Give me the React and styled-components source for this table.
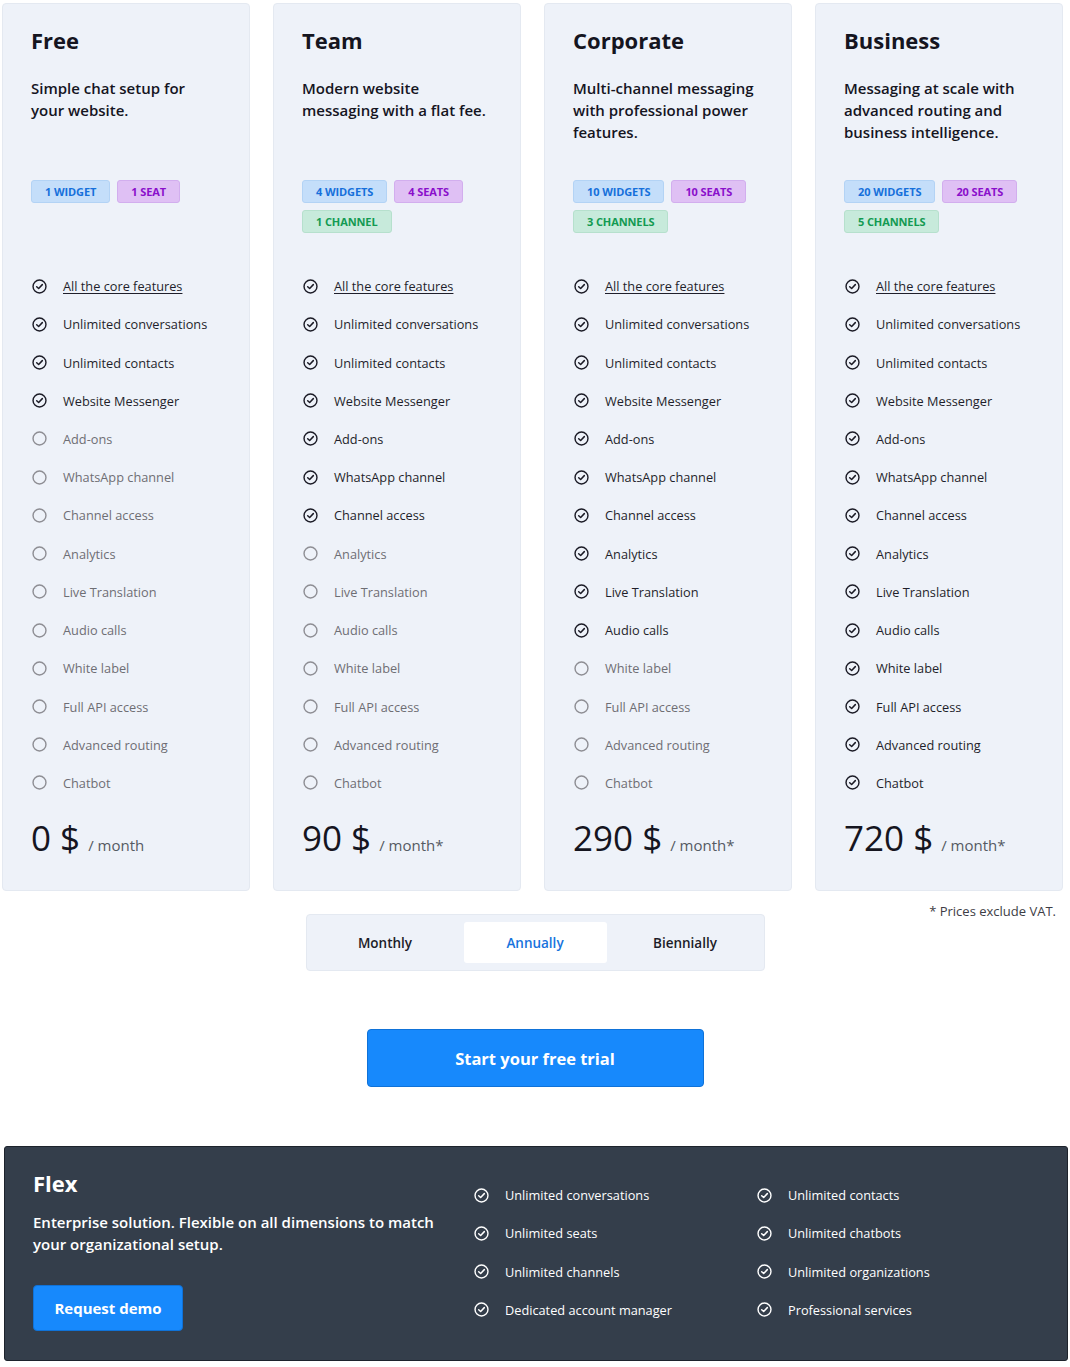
import React from 'react';
import styled, { createGlobalStyle } from 'styled-components';

const GlobalStyle = createGlobalStyle`
  body {
    margin: 0;
    background: #fff;
    font-family: "Open Sans", "Noto Sans", sans-serif;
    color: #1c1c28;
  }
`;

const FEATURES = [
  'All the core features',
  'Unlimited conversations',
  'Unlimited contacts',
  'Website Messenger',
  'Add-ons',
  'WhatsApp channel',
  'Channel access',
  'Analytics',
  'Live Translation',
  'Audio calls',
  'White label',
  'Full API access',
  'Advanced routing',
  'Chatbot',
];

const plans = [
  {
    name: 'Free',
    desc: 'Simple chat setup for your website.',
    badges: [['blue', '1 widget'], ['purple', '1 seat']],
    included: 4,
    price: '0 $',
    per: '/ month',
  },
  {
    name: 'Team',
    desc: 'Modern website messaging with a flat fee.',
    badges: [['blue', '4 widgets'], ['purple', '4 seats'], ['green', '1 channel']],
    included: 7,
    price: '90 $',
    per: '/ month*',
  },
  {
    name: 'Corporate',
    desc: 'Multi-channel messaging with professional power features.',
    badges: [['blue', '10 widgets'], ['purple', '10 seats'], ['green', '3 channels']],
    included: 10,
    price: '290 $',
    per: '/ month*',
  },
  {
    name: 'Business',
    desc: 'Messaging at scale with advanced routing and business intelligence.',
    badges: [['blue', '20 widgets'], ['purple', '20 seats'], ['green', '5 channels']],
    included: 14,
    price: '720 $',
    per: '/ month*',
  },
];

const flexFeatures = [
  'Unlimited conversations',
  'Unlimited contacts',
  'Unlimited seats',
  'Unlimited chatbots',
  'Unlimited channels',
  'Unlimited organizations',
  'Dedicated account manager',
  'Professional services',
];

const badgeColors = {
  blue: { bg: '#c4defa', fg: '#1670db', border: '#b3d3f5' },
  purple: { bg: '#dfc0f4', fg: '#8a0fcb', border: '#d2aeee' },
  green: { bg: '#c7eadb', fg: '#139a52', border: '#b6e0cd' },
};

const Page = styled.div`
  width: 1070px;
  padding-top: 3px;
  padding-bottom: 7px;
`;

const Cards = styled.div`
  display: grid;
  grid-template-columns: repeat(4, 248px);
  gap: 23px;
  padding: 0 7px 0 2px;
`;

const Card = styled.div`
  background: #eef2f9;
  border: 1px solid #e4e9f1;
  border-radius: 4px;
  padding: 21px 0 23px 28px;
  display: flex;
  flex-direction: column;
`;

const PlanName = styled.h2`
  margin: 0;
  font-size: 22px;
  line-height: 30px;
  font-weight: 700;
  color: #15151f;
`;

const PlanDesc = styled.p`
  margin: 22px 0 0;
  height: 103px;
  width: 190px;
  font-size: 15px;
  line-height: 22px;
  font-weight: 600;
  color: #15151f;
`;

const Badges = styled.div`
  display: flex;
  flex-wrap: wrap;
  gap: 7px 7px;
  align-content: flex-start;
  height: 87px;
  width: 200px;
`;

const Badge = styled.span`
  display: inline-flex;
  align-items: center;
  height: 23px;
  box-sizing: border-box;
  padding: 0 13px;
  border-radius: 3px;
  font-size: 11px;
  font-weight: 700;
  text-transform: uppercase;
  letter-spacing: -0.1px;
  background: ${p => badgeColors[p.$tone].bg};
  color: ${p => badgeColors[p.$tone].fg};
  border: 1px solid ${p => badgeColors[p.$tone].border};
`;

const FeatureList = styled.ul`
  list-style: none;
  margin: 0;
  padding: 0;
`;

const Feature = styled.li`
  display: flex;
  align-items: center;
  gap: 16px;
  height: 38.23px;
  padding-left: 1px;
  font-size: 12.75px;
  color: ${p => (p.$on ? '#1f1f2b' : '#6e6e74')};
`;

const FeatureLabel = styled.span`
  text-decoration: ${p => (p.$link ? 'underline' : 'none')};
  text-underline-offset: 2px;
`;

const PriceRow = styled.div`
  display: flex;
  align-items: baseline;
  margin-top: 14px;
  line-height: 44px;
`;

const Price = styled.span`
  font-size: 35px;
  font-weight: 400;
  color: #15151f;
`;

const Per = styled.span`
  margin-left: 8px;
  font-size: 15px;
  color: #555a63;
`;

const ToggleRow = styled.div`
  display: grid;
  grid-template-columns: 1fr auto 1fr;
  margin-top: 9px;
  padding-right: 14px;
`;

const Note = styled.div`
  grid-column: 3;
  justify-self: end;
  font-size: 13px;
  line-height: 22px;
  color: #3d3d45;
`;

const Toggle = styled.div`
  grid-column: 2;
  margin-top: 14px;
  margin-left: 14px;
  display: flex;
  gap: 7px;
  padding: 7px;
  background: #eef2f9;
  border: 1px solid #e4e9f1;
  border-radius: 4px;
`;

const Tab = styled.div`
  width: 143px;
  height: 41px;
  display: flex;
  align-items: center;
  justify-content: center;
  border-radius: 3px;
  font-size: 13.5px;
  font-weight: 600;
  background: ${p => (p.$active ? '#ffffff' : 'transparent')};
  color: ${p => (p.$active ? '#1773dd' : '#1c1c28')};
`;

const CtaWrap = styled.div`
  display: flex;
  justify-content: center;
  margin-top: 58px;
`;

const Cta = styled.button`
  width: 337px;
  height: 58px;
  background: #1789fc;
  border: 1px solid #0f72d8;
  border-radius: 4px;
  color: #fff;
  font-family: inherit;
  font-size: 16.5px;
  font-weight: 700;
`;

const Flex = styled.section`
  margin: 59px 2px 0 4px;
  height: 215px;
  box-sizing: border-box;
  background: #343e4b;
  border: 1px solid #1d232c;
  border-radius: 3px;
  display: grid;
  grid-template-columns: 440px 1fr;
  padding: 21px 0 0 28px;
  color: #fff;
`;

const FlexInfo = styled.div`
  display: flex;
  flex-direction: column;
  align-items: flex-start;
`;

const FlexTitle = styled.h2`
  margin: 0;
  font-size: 22px;
  line-height: 30px;
  font-weight: 700;
`;

const FlexDesc = styled.p`
  margin: 13px 0 0;
  max-width: 410px;
  font-size: 15px;
  line-height: 22px;
  font-weight: 600;
`;

const DemoButton = styled.button`
  margin-top: 30px;
  width: 150px;
  height: 46px;
  background: #1789fc;
  border: 1px solid #0f72d8;
  border-radius: 4px;
  color: #fff;
  font-family: inherit;
  font-size: 15px;
  font-weight: 700;
`;

const FlexGrid = styled.ul`
  list-style: none;
  margin: 0;
  padding: 8px 0 0 1px;
  display: grid;
  grid-template-columns: 283px 1fr;
  grid-auto-rows: 38.2px;
`;

const FlexItem = styled.li`
  display: flex;
  align-items: center;
  gap: 16px;
  font-size: 12.75px;
  color: #fff;
`;

const CheckIcon = ({ color = '#1b1b26', on = true }) => (
  <svg width="15" height="15" viewBox="0 0 16 16" fill="none">
    <circle cx="8" cy="8" r="6.9" stroke={color} strokeWidth="1.5" />
    {on && (
      <path d="M5 8.2 L7.1 10.2 L11 6" stroke={color} strokeWidth="1.6" strokeLinecap="round" strokeLinejoin="round" />
    )}
  </svg>
);

const App = () => (
  <Page>
    <GlobalStyle />
    <Cards>
      {plans.map(plan => (
        <Card key={plan.name}>
          <PlanName>{plan.name}</PlanName>
          <PlanDesc>{plan.desc}</PlanDesc>
          <Badges>
            {plan.badges.map(([tone, label]) => (
              <Badge key={label} $tone={tone}>{label}</Badge>
            ))}
          </Badges>
          <FeatureList>
            {FEATURES.map((f, i) => {
              const on = i < plan.included;
              return (
                <Feature key={f} $on={on}>
                  <CheckIcon on={on} color={on ? '#1b1b26' : '#8e8e94'} />
                  <FeatureLabel $link={i === 0}>{f}</FeatureLabel>
                </Feature>
              );
            })}
          </FeatureList>
          <PriceRow>
            <Price>{plan.price}</Price>
            <Per>{plan.per}</Per>
          </PriceRow>
        </Card>
      ))}
    </Cards>

    <ToggleRow>
      <Toggle>
        <Tab>Monthly</Tab>
        <Tab $active>Annually</Tab>
        <Tab>Biennially</Tab>
      </Toggle>
      <Note>* Prices exclude VAT.</Note>
    </ToggleRow>

    <CtaWrap>
      <Cta>Start your free trial</Cta>
    </CtaWrap>

    <Flex>
      <FlexInfo>
        <FlexTitle>Flex</FlexTitle>
        <FlexDesc>Enterprise solution. Flexible on all dimensions to match your organizational setup.</FlexDesc>
        <DemoButton>Request demo</DemoButton>
      </FlexInfo>
      <FlexGrid>
        {flexFeatures.map(f => (
          <FlexItem key={f}>
            <CheckIcon color="#ffffff" />
            {f}
          </FlexItem>
        ))}
      </FlexGrid>
    </Flex>
  </Page>
);

export default App;
